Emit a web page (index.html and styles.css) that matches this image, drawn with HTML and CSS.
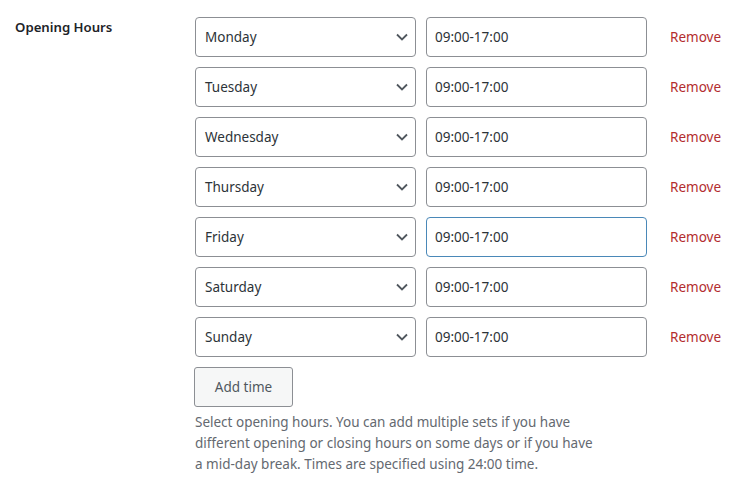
FILE: index.html
```html
<!DOCTYPE html>
<html>
<head>
<meta charset="utf-8">
<link rel="stylesheet" href="styles.css">
</head>
<body>
<div class="form-row">
  <div class="label">Opening Hours</div>
  <div class="field">
    <div class="rows">
      <div class="row"><div class="select">Monday<span class="chev"><svg width="12" height="8" viewBox="0 0 12 8"><path d="M1 1.5l5 5 5-5" fill="none" stroke="#50575e" stroke-width="1.8"/></svg></span></div><div class="input">09:00-17:00</div><a class="remove">Remove</a></div>
      <div class="row"><div class="select">Tuesday<span class="chev"><svg width="12" height="8" viewBox="0 0 12 8"><path d="M1 1.5l5 5 5-5" fill="none" stroke="#50575e" stroke-width="1.8"/></svg></span></div><div class="input">09:00-17:00</div><a class="remove">Remove</a></div>
      <div class="row"><div class="select">Wednesday<span class="chev"><svg width="12" height="8" viewBox="0 0 12 8"><path d="M1 1.5l5 5 5-5" fill="none" stroke="#50575e" stroke-width="1.8"/></svg></span></div><div class="input">09:00-17:00</div><a class="remove">Remove</a></div>
      <div class="row"><div class="select">Thursday<span class="chev"><svg width="12" height="8" viewBox="0 0 12 8"><path d="M1 1.5l5 5 5-5" fill="none" stroke="#50575e" stroke-width="1.8"/></svg></span></div><div class="input">09:00-17:00</div><a class="remove">Remove</a></div>
      <div class="row"><div class="select">Friday<span class="chev"><svg width="12" height="8" viewBox="0 0 12 8"><path d="M1 1.5l5 5 5-5" fill="none" stroke="#50575e" stroke-width="1.8"/></svg></span></div><div class="input focus">09:00-17:00</div><a class="remove">Remove</a></div>
      <div class="row"><div class="select">Saturday<span class="chev"><svg width="12" height="8" viewBox="0 0 12 8"><path d="M1 1.5l5 5 5-5" fill="none" stroke="#50575e" stroke-width="1.8"/></svg></span></div><div class="input">09:00-17:00</div><a class="remove">Remove</a></div>
      <div class="row"><div class="select">Sunday<span class="chev"><svg width="12" height="8" viewBox="0 0 12 8"><path d="M1 1.5l5 5 5-5" fill="none" stroke="#50575e" stroke-width="1.8"/></svg></span></div><div class="input">09:00-17:00</div><a class="remove">Remove</a></div>
    </div>
    <div class="button">Add time</div>
    <p class="help">Select opening hours. You can add multiple sets if you have different opening or closing hours on some days or if you have a mid-day break. Times are specified using 24:00 time.</p>
  </div>
</div>
</body>
</html>
```
FILE: styles.css
```css
html, body {
  margin: 0;
  padding: 0;
  background: #fff;
}
body {
  font-family: "Noto Sans", "Open Sans", sans-serif;
  font-size: 14px;
  color: #1d2327;
}
.form-row {
  display: flex;
  padding: 17px 0 0 15px;
}
.label {
  width: 180px;
  flex: none;
  font-weight: 600;
  font-size: 13.2px;
  line-height: 20px;
}
.field {
  display: flex;
  flex-direction: column;
  align-items: flex-start;
}
.rows {
  display: flex;
  flex-direction: column;
  gap: 10px;
}
.row {
  display: flex;
  align-items: center;
}
.select, .input {
  box-sizing: border-box;
  height: 40px;
  width: 221px;
  border: 1px solid #8c8f94;
  border-radius: 4px;
  display: flex;
  align-items: center;
  font-size: 13.5px;
  color: #2c3338;
  background: #fff;
}
.select {
  padding: 0 0 0 9px;
  justify-content: space-between;
}
.chev {
  display: flex;
  margin-right: 7px;
}
.input {
  margin-left: 10px;
  padding-left: 8px;
}
.input.focus {
  border-color: #4a88b8;
}
.remove {
  margin-left: 23px;
  color: #b32d2e;
  font-size: 13.5px;
}
.button {
  box-sizing: border-box;
  margin-top: 10px;
  height: 40px;
  width: 99px;
  margin-left: -1px;
  border: 1px solid #8c8f94;
  border-radius: 3px;
  background: #f6f7f7;
  color: #50575e;
  display: flex;
  align-items: center;
  justify-content: center;
  font-size: 13.5px;
}
.help {
  margin: 5px 0 0 0;
  width: 398px;
  color: #646970;
  font-size: 13.5px;
  line-height: 21px;
}
```
